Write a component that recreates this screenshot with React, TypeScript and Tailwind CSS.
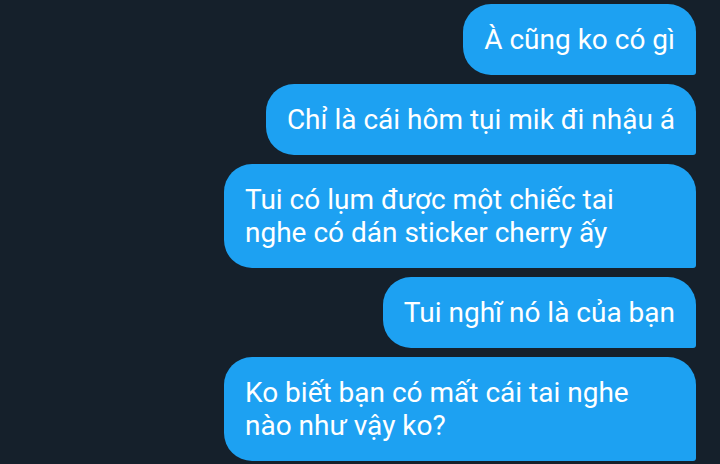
const messages = [
  ['À cũng ko có gì'],
  ['Chỉ là cái hôm tụi mik đi nhậu á'],
  ['Tui có lụm được một chiếc tai', 'nghe có dán sticker cherry ấy'],
  ['Tui nghĩ nó là của bạn'],
  ['Ko biết bạn có mất cái tai nghe', 'nào như vậy ko?'],
];

export default function App() {
  return (
    <div
      className="w-[720px] h-[464px] overflow-hidden bg-[#15202b] pt-[4px] pr-[24px] flex flex-col items-end gap-[9px]"
      style={{ fontFamily: 'Roboto, "Noto Sans", sans-serif' }}
    >
      {messages.map((lines, i) => (
        <div
          key={i}
          className={
            (lines.length > 1 ? 'w-[472px] ' : '') +
            'bg-[#1da1f2] text-white text-[28px] leading-[33px] px-[21px] py-[19px] rounded-[28px] rounded-br-[3px] whitespace-nowrap'
          }
        >
          {lines.map((l, j) => (
            <div key={j}>{l}</div>
          ))}
        </div>
      ))}
    </div>
  );
}
